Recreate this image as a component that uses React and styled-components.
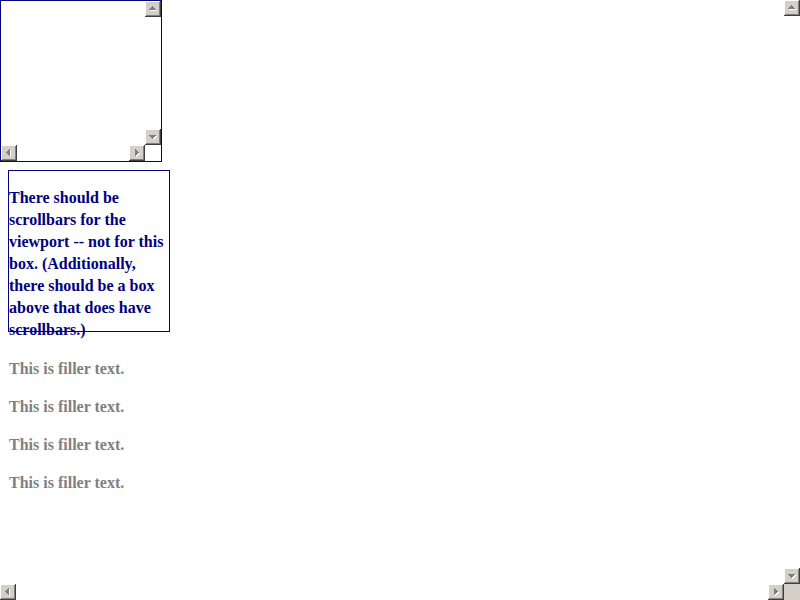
import React from "react";
import styled, { createGlobalStyle } from "styled-components";

const Global = createGlobalStyle`
  html, body { margin: 0; padding: 0; background: #ffffff; overflow: hidden; }
  body { font-family: "Liberation Serif", "Times New Roman", serif; }
`;

const Frame = styled.div`
  width: 800px;
  height: 600px;
  display: grid;
  grid-template-columns: 1fr 16px;
  grid-template-rows: 1fr 16px;
  background: #ffffff;
`;

const ScrollFrame = styled.div`
  width: 160px;
  height: 160px;
  border: 1px solid #000080;
  display: grid;
  grid-template-columns: 1fr 16px;
  grid-template-rows: 1fr 16px;
`;

const Viewport = styled.div`
  overflow: hidden;
  min-width: 0;
  min-height: 0;
`;

const VBar = styled.div`
  display: flex;
  flex-direction: column;
  justify-content: space-between;
`;

const HBar = styled.div`
  display: flex;
  flex-direction: row;
  justify-content: space-between;
`;

const Corner = styled.div`
  background: ${(p) => (p.$filled ? "#d4d0c8" : "transparent")};
`;

const Btn = styled.div`
  width: 16px;
  height: 16px;
  box-sizing: border-box;
  background: #d4d0c8;
  box-shadow: inset -1px -1px #404040, inset 1px 1px #ffffff,
    inset -2px -2px #808080, inset 2px 2px #d4d0c8;
  display: flex;
  align-items: center;
  justify-content: center;
  flex: none;
  svg { display: block; }
`;

const Content = styled.div`
  padding: 8px 8px 0 8px;
`;

const Filler = styled.div`
  padding: 10px 0 0 1px;
`;

const TextBox = styled.div`
  width: 160px;
  height: 160px;
  border: 1px solid #000080;
  color: #000080;
  font-weight: bold;
  font-size: 16px;
  line-height: 22px;
`;

const Para = styled.p`
  margin: 16px 0;
  font-weight: bold;
  font-size: 16px;
  line-height: 22px;
  color: ${(p) => p.$color || "inherit"};
`;

const shapes = {
  up: "7.5,5 11.5,9 3.5,9",
  down: "3.5,6 11.5,6 7.5,10",
  left: "9,3.5 9,11.5 5,7.5",
  right: "6,3.5 6,11.5 10,7.5",
};

const Arrow = ({ dir }) => {
  const pts = shapes[dir];
  return (
    <svg width="16" height="16" viewBox="0 0 16 16" shapeRendering="crispEdges">
      <polygon points={pts} fill="#ffffff" transform="translate(1,1)" />
      <polygon points={pts} fill="#808080" />
    </svg>
  );
};

const ScrollBtn = ({ dir }) => (
  <Btn>
    <Arrow dir={dir} />
  </Btn>
);

const Bars = ({ filledCorner }) => (
  <>
    <VBar>
      <ScrollBtn dir="up" />
      <ScrollBtn dir="down" />
    </VBar>
    <HBar>
      <ScrollBtn dir="left" />
      <ScrollBtn dir="right" />
    </HBar>
    <Corner $filled={filledCorner} />
  </>
);

export default function App() {
  return (
    <>
      <Global />
      <Frame>
        <Viewport>
          <ScrollFrame>
            <Viewport />
            <Bars />
          </ScrollFrame>
          <Content>
            <TextBox>
              <Para>
                There should be scrollbars for the viewport -- not for this box.
                (Additionally, there should be a box above that does have
                scrollbars.)
              </Para>
            </TextBox>
            <Filler>
              <Para $color="#808080">This is filler text.</Para>
              <Para $color="#808080">This is filler text.</Para>
              <Para $color="#808080">This is filler text.</Para>
              <Para $color="#808080">This is filler text.</Para>
            </Filler>
          </Content>
        </Viewport>
        <Bars filledCorner />
      </Frame>
    </>
  );
}
